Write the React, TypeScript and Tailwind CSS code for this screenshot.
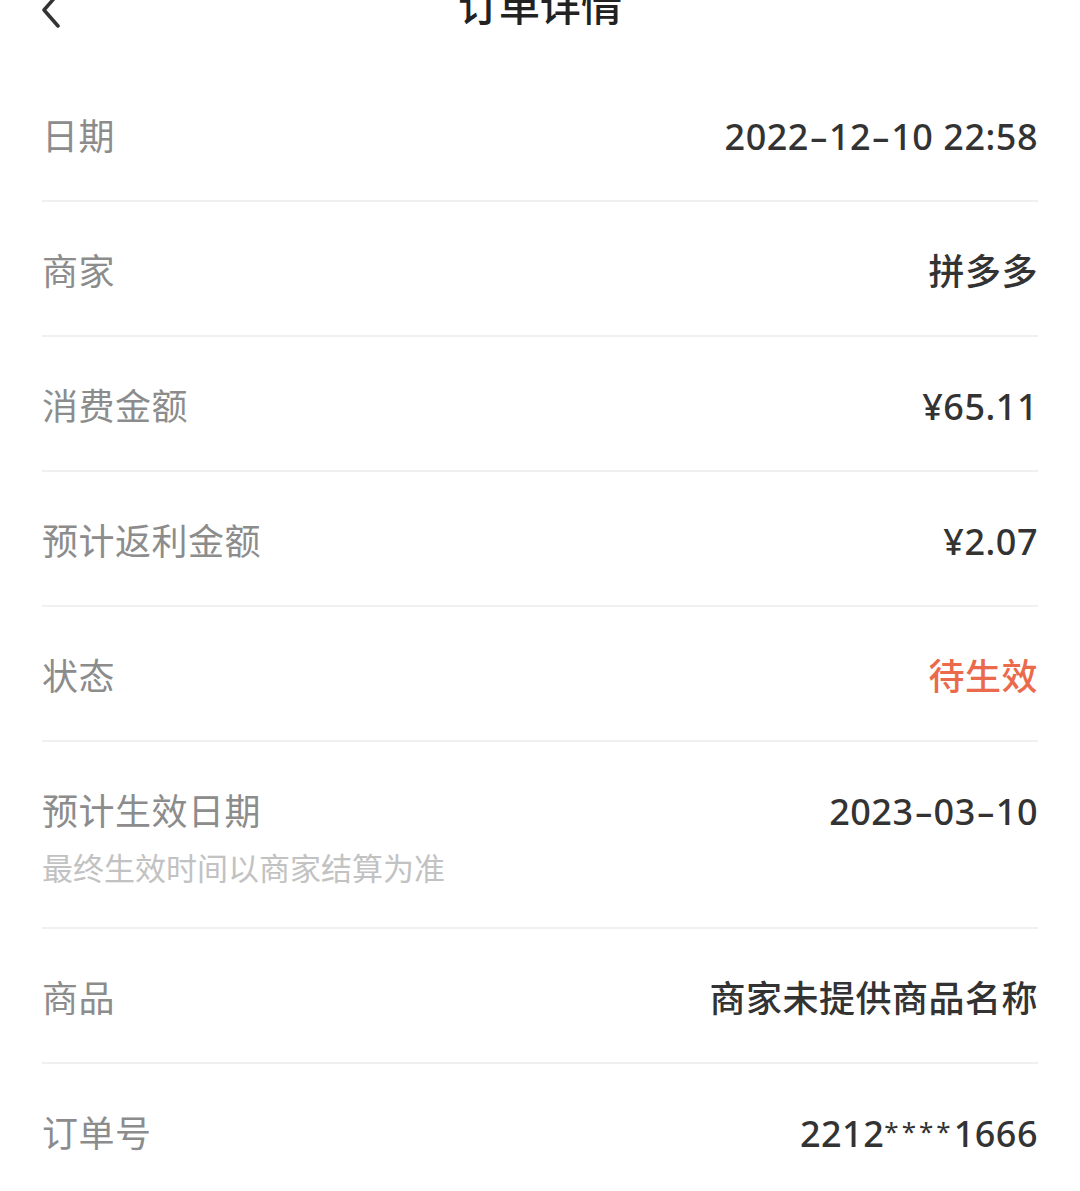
const rows: { label: string; value: string; sub?: string; accent?: boolean }[] = [
  { label: "日期", value: "2022-12-10 22:58" },
  { label: "商家", value: "拼多多" },
  { label: "消费金额", value: "¥65.11" },
  { label: "预计返利金额", value: "¥2.07" },
  { label: "状态", value: "待生效", accent: true },
  { label: "预计生效日期", value: "2023-03-10", sub: "最终生效时间以商家结算为准" },
  { label: "商品", value: "商家未提供商品名称" },
  { label: "订单号", value: "2212****1666" },
];

// dashes and masked digits are drawn a bit differently in the app font
function Value({ text }: { text: string }) {
  const parts = text.split(/(-|\*+)/).filter(Boolean);
  return (
    <>
      {parts.map((p, i) => {
        if (p === "-")
          return (
            <span key={i} className="mx-[4px] inline-block scale-x-[1.6]">
              -
            </span>
          );
        if (p.startsWith("*"))
          return (
            <span key={i} className="relative -top-[6px] text-[26px] font-normal tracking-[3px]">
              {p}
            </span>
          );
        return <span key={i}>{p}</span>;
      })}
    </>
  );
}

export default function App() {
  return (
    <div
      className="min-h-[1191px] overflow-hidden bg-white"
      style={{ fontFamily: '"Noto Sans", "Noto Sans CJK SC", sans-serif' }}
    >
      <header className="relative -mt-[55px] flex h-[122px] items-center justify-center">
        <button className="absolute left-[38px] top-[calc(50%+4px)] -translate-y-1/2 text-[#333]">
          <svg width="28" height="44" viewBox="0 0 28 44" fill="none">
            <path d="M20 6 L6 22 L20 38" stroke="currentColor" strokeWidth="3.5" strokeLinecap="round" strokeLinejoin="round" />
          </svg>
        </button>
        <h1 className="text-[41px] font-medium text-[#222]">订单详情</h1>
      </header>

      <div className="px-[42px]">
        {rows.map((row, i) => (
          <div
            key={row.label}
            className={`flex justify-between ${i < rows.length - 1 ? "border-b-2 border-[#f0f0f0]" : ""} ${row.sub ? "pt-[50px] pb-[39px]" : "pt-[50px] pb-[43px]"}`}
          >
            <div className="min-w-0">
              <div className="text-[36px] leading-[40px] tracking-[0.5px] text-[#8c8c8c]">{row.label}</div>
              {row.sub && (
                <div className="mt-[16px] text-[31px] leading-[40px] text-[#c2c2c2]">{row.sub}</div>
              )}
            </div>
            <div
              className={`h-[40px] whitespace-nowrap text-[36px] font-medium leading-[40px] tracking-[0.5px] ${row.accent ? "text-[#ea6a4b]" : "text-[#333]"}`}
            >
              <Value text={row.value} />
            </div>
          </div>
        ))}
      </div>
    </div>
  );
}
